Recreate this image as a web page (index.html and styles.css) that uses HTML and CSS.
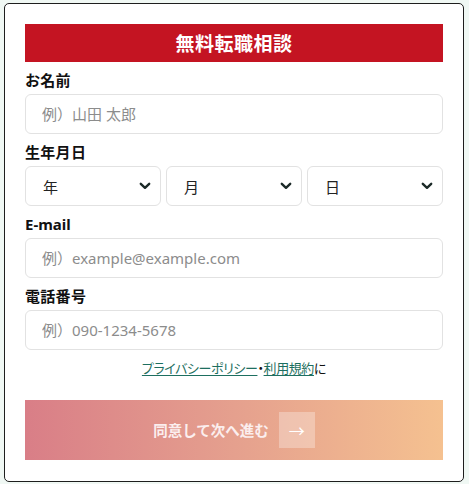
FILE: index.html
```html
<!DOCTYPE html>
<html lang="ja">
<head>
<meta charset="utf-8">
<link rel="stylesheet" href="styles.css">
</head>
<body>
<div class="card">
  <h1 class="title">無料転職相談</h1>
  <label class="label">お名前</label>
  <input class="field" type="text" placeholder="例）山田 太郎">
  <label class="label">生年月日</label>
  <div class="selects">
    <div class="select"><span>年</span><svg class="chev" width="12" height="8" viewBox="0 0 12 8"><polyline points="1.8,1.8 6,5.8 10.2,1.8" fill="none" stroke="#1c2a28" stroke-width="2.4" stroke-linecap="round" stroke-linejoin="round"/></svg></div>
    <div class="select"><span>月</span><svg class="chev" width="12" height="8" viewBox="0 0 12 8"><polyline points="1.8,1.8 6,5.8 10.2,1.8" fill="none" stroke="#1c2a28" stroke-width="2.4" stroke-linecap="round" stroke-linejoin="round"/></svg></div>
    <div class="select"><span>日</span><svg class="chev" width="12" height="8" viewBox="0 0 12 8"><polyline points="1.8,1.8 6,5.8 10.2,1.8" fill="none" stroke="#1c2a28" stroke-width="2.4" stroke-linecap="round" stroke-linejoin="round"/></svg></div>
  </div>
  <label class="label latin">E-mail</label>
  <input class="field" type="text" placeholder="例）example@example.com">
  <label class="label">電話番号</label>
  <input class="field" type="text" placeholder="例）090-1234-5678">
  <p class="terms"><a href="#">プライバシーポリシー</a>・<a href="#">利用規約</a>に</p>
  <button class="submit" type="button"><span class="submit-text">同意して次へ進む</span><span class="arrow">→</span></button>
</div>
</body>
</html>
```

FILE: styles.css
```css
* { box-sizing: border-box; }
html, body { margin: 0; padding: 0; }
body {
  background: #f0f8f4;
  padding: 3px 4px;
  font-family: "Noto Sans", "Noto Sans CJK JP", sans-serif;
  color: #1a1a1a;
}
.card {
  width: 460px;
  height: 479px;
  background: #fff;
  border: 1px solid #1e1e1e;
  border-radius: 5px;
  padding: 20px 20px 20px 20px;
  display: flex;
  flex-direction: column;
}
.title {
  margin: 0;
  height: 38px;
  background: #c41422;
  color: #fff;
  font-family: "Noto Sans CJK JP", sans-serif;
  font-size: 19px;
  font-weight: 700;
  letter-spacing: 0.5px;
  line-height: 38px;
  text-align: center;
}
.label {
  display: block;
  height: 32px;
  padding-top: 7px;
  font-family: "Noto Sans CJK JP", sans-serif;
  font-size: 15px;
  font-weight: 700;
  line-height: 22px;
  letter-spacing: 0.3px;
  color: #111;
}
.label.latin {
  font-family: "Noto Sans", "Noto Sans CJK JP", sans-serif;
  letter-spacing: 0;
}
.field {
  display: block;
  width: 100%;
  height: 40px;
  margin: 0;
  border: 1px solid #e2e2e2;
  border-radius: 6px;
  padding: 0 16px;
  font-family: "Noto Sans", "Noto Sans CJK JP", sans-serif;
  font-size: 15px;
  color: #222;
  background: #fff;
  outline: none;
}
.field::placeholder { color: #8c8c8c; }
.selects {
  display: grid;
  grid-template-columns: 1fr 1fr 1fr;
  gap: 5px;
  height: 40px;
}
.select {
  display: flex;
  align-items: center;
  justify-content: space-between;
  height: 40px;
  border: 1px solid #e2e2e2;
  border-radius: 6px;
  padding: 0 9px 0 17px;
  font-family: "Noto Sans CJK JP", sans-serif;
  font-size: 15px;
  color: #222;
}
.chev { display: block; }
.terms {
  margin: 0;
  height: 50px;
  padding-top: 8px;
  text-align: center;
  font-family: "Noto Sans CJK JP", sans-serif;
  font-size: 13px;
  line-height: 20px;
  letter-spacing: -0.4px;
  font-feature-settings: "palt";
  color: #111;
}
.terms a {
  color: #1d6f60;
  text-decoration: underline;
  text-underline-offset: 2px;
}
.submit {
  display: flex;
  align-items: center;
  justify-content: center;
  gap: 10px;
  width: 100%;
  height: 60px;
  margin: 0;
  border: none;
  padding: 0;
  background: linear-gradient(90deg, #d97e87 0%, #e5a08e 50%, #f5c190 100%);
  font-family: "Noto Sans CJK JP", sans-serif;
  font-size: 14.5px;
  font-weight: 700;
  color: #fbeeee;
}
.submit-text { line-height: 22px; }
.arrow {
  display: flex;
  align-items: center;
  justify-content: center;
  width: 36px;
  height: 36px;
  background: rgba(255, 255, 255, 0.3);
  color: #fff;
  font-weight: 400;
  font-size: 16px;
}
```
